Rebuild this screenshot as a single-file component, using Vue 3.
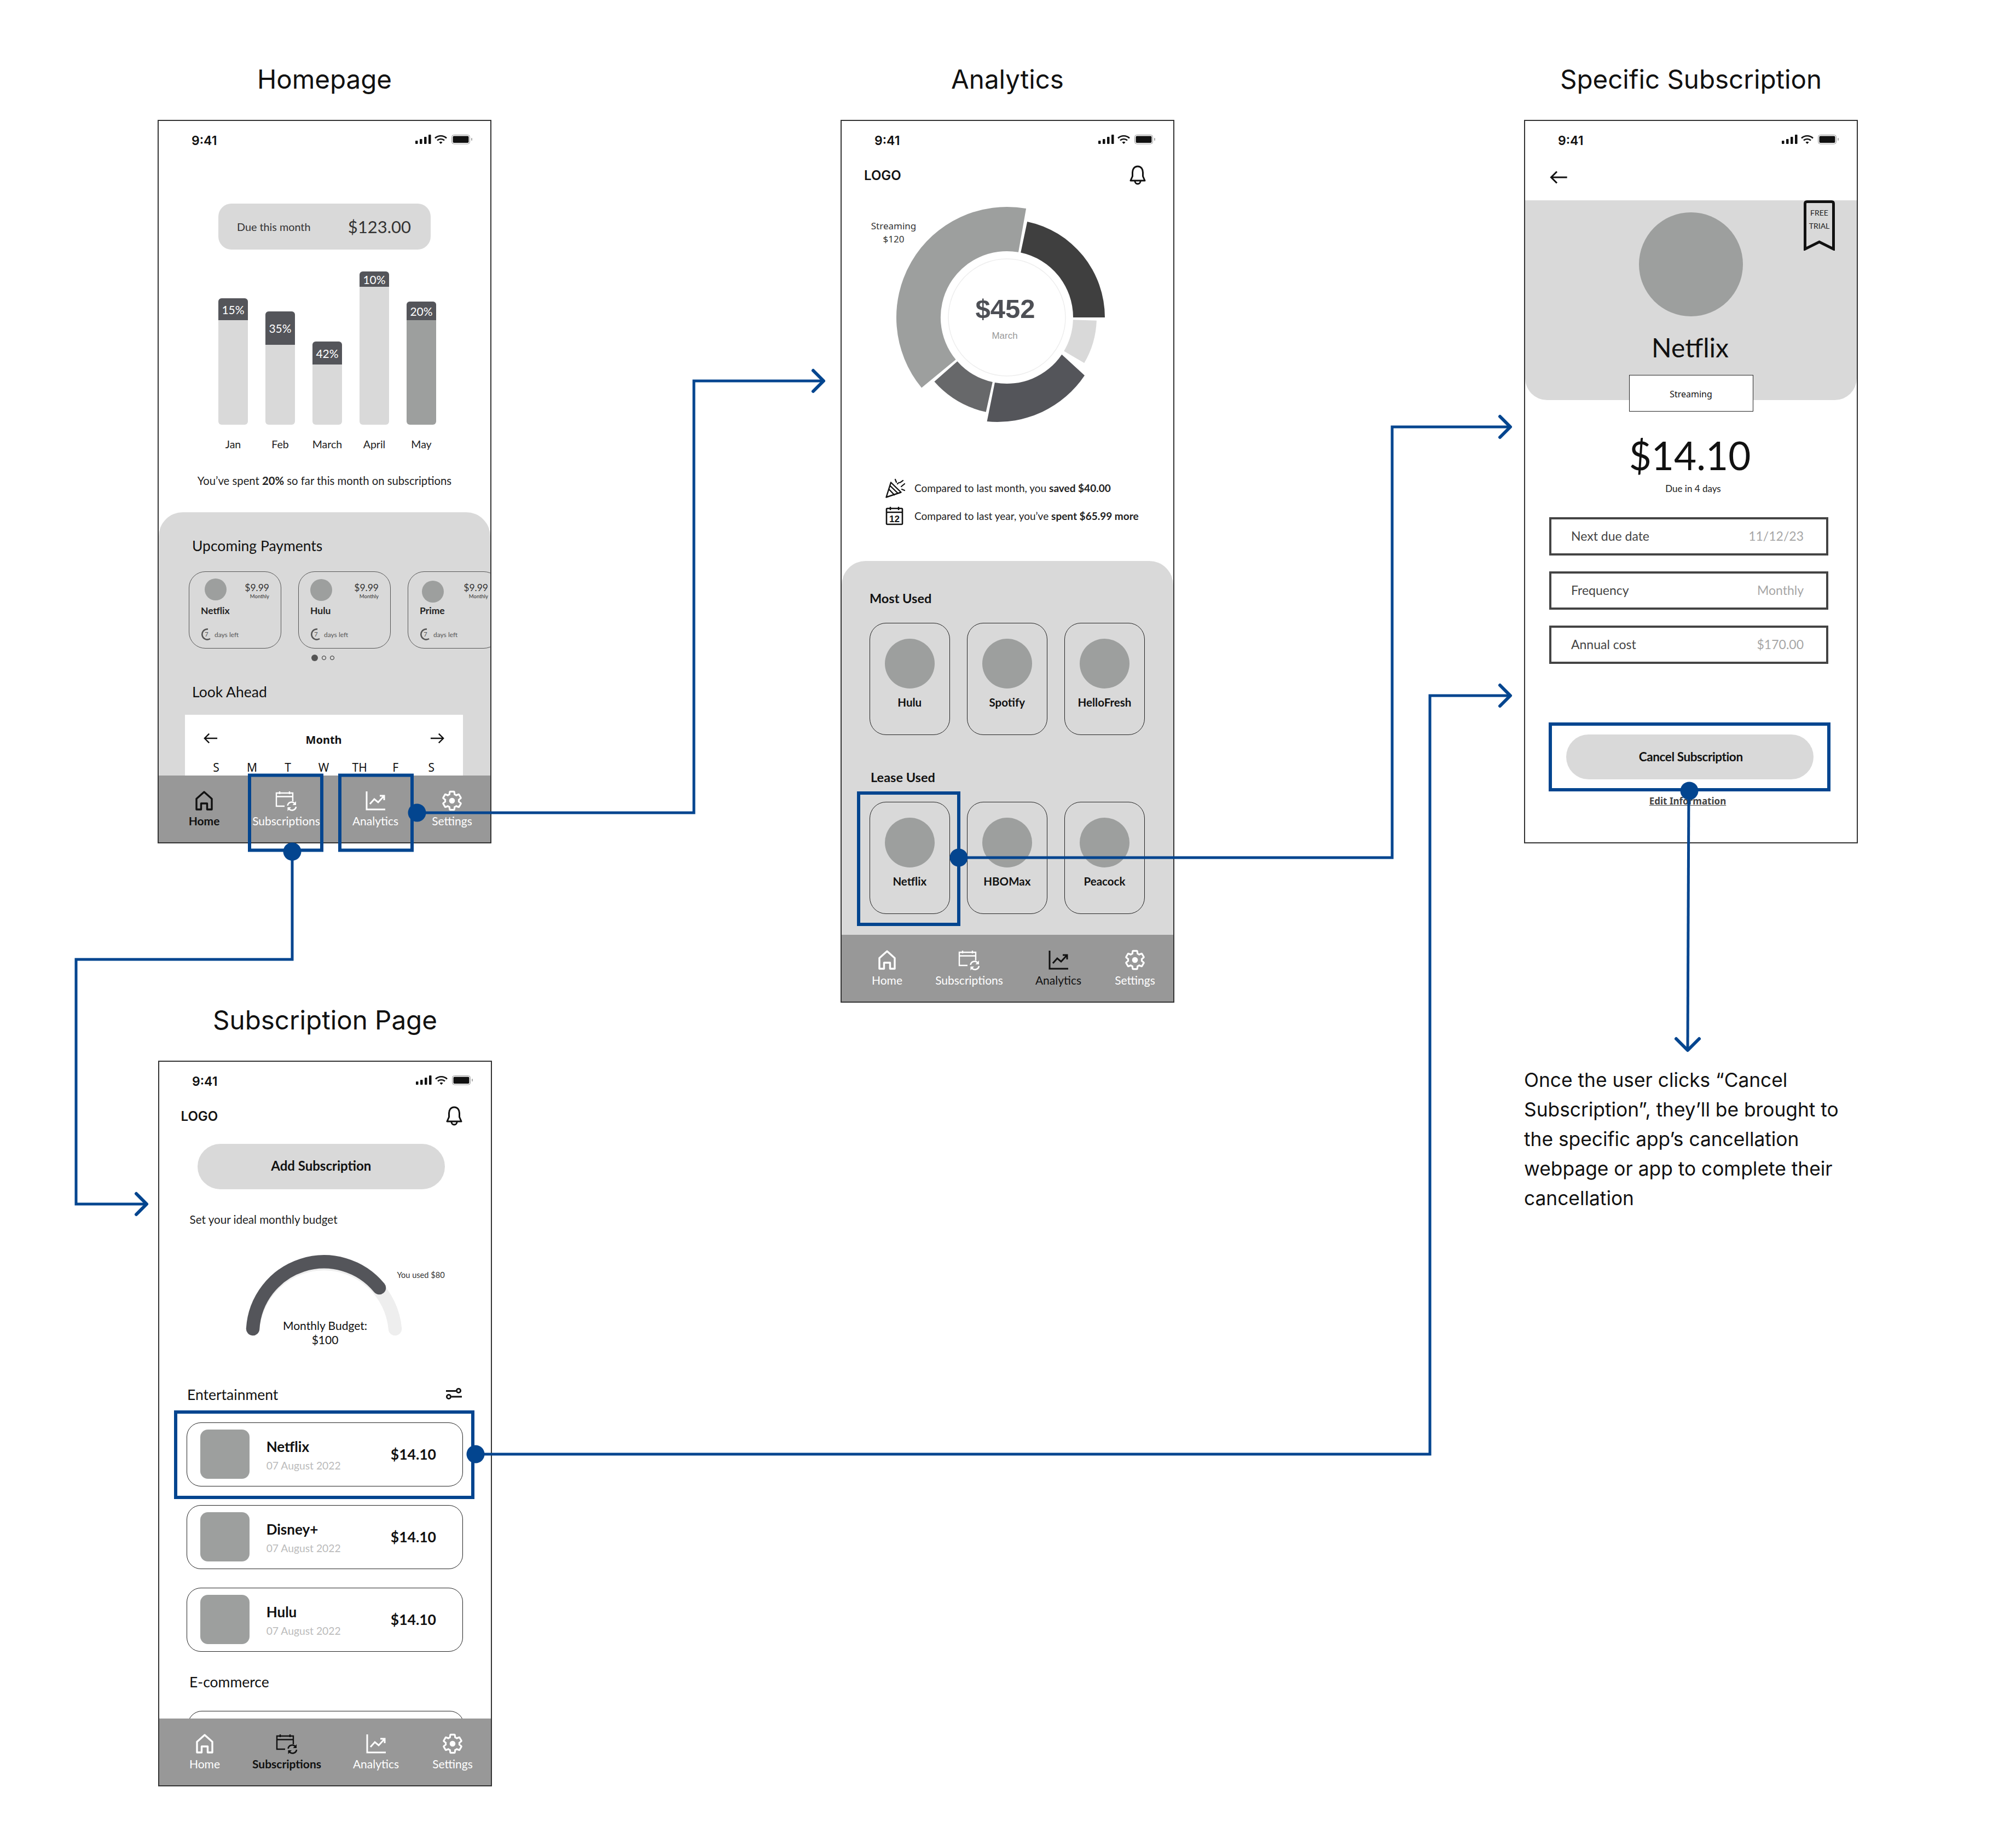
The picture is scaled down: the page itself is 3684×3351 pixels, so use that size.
<script setup>
const navItems = [
  { label: 'Home', icon: '#ico-home' },
  { label: 'Subscriptions', icon: '#ico-subs' },
  { label: 'Analytics', icon: '#ico-chart' },
  { label: 'Settings', icon: '#ico-gear' }
]

const bars = [
  { month: 'Jan', pct: '15%', height: 231, head: 40 },
  { month: 'Feb', pct: '35%', height: 207, head: 61 },
  { month: 'March', pct: '42%', height: 152, head: 42 },
  { month: 'April', pct: '10%', height: 280, head: 28 },
  { month: 'May', pct: '20%', height: 225, head: 34, current: true }
]

const payments = [
  { name: 'Netflix', left: 28, top: 14 },
  { name: 'Hulu', left: 21, top: 15 },
  { name: 'Prime', left: 25, top: 18 }
]

const weekdays = ['S', 'M', 'T', 'W', 'TH', 'F', 'S']
const mostUsed = ['Hulu', 'Spotify', 'HelloFresh']
const leastUsed = ['Netflix', 'HBOMax', 'Peacock']

const details = [
  { label: 'Next due date', value: '11/12/23' },
  { label: 'Frequency', value: 'Monthly' },
  { label: 'Annual cost', value: '$170.00' }
]

const subscriptions = ['Netflix', 'Disney+', 'Hulu']

// donut slices, angles clockwise from the top, around the same centre
const cx = 1840
const cy = 580

function point(r, deg) {
  const a = (deg * Math.PI) / 180
  return `${(cx + r * Math.sin(a)).toFixed(1)} ${(cy - r * Math.cos(a)).toFixed(1)}`
}

function slice(start, end, outer, inner = 121) {
  const large = end - start > 180 ? 1 : 0
  return `M${point(inner, start)} L${point(outer, start)} A${outer} ${outer} 0 ${large} 1 ${point(outer, end)} L${point(inner, end)} A${inner} ${inner} 0 ${large} 0 ${point(inner, start)}Z`
}

const slices = [
  { d: slice(230.5, 370, 202), fill: '#9d9f9e' },
  { d: slice(12, 90, 179), fill: '#3f3f3f' },
  { d: slice(92, 120.5, 164), fill: '#d9d9d9' },
  { d: `M${point(121, 124)} L1982 686 A192 192 0 0 1 1803.6 770 L${point(121, 190.5)} A121 121 0 0 0 ${point(121, 124)}Z`, fill: '#54555a' },
  { d: slice(192.5, 228.5, 177), fill: '#67686a' }
]

const links = [
  'M762 1485H1268V696H1505',
  'M534 1556V1753H139V2200H268',
  'M1752 1567H2544V780H2760',
  'M869 2657H2613V1271H2760',
  'M3086 1446L3084 1918'
]

const heads = [
  'M1486 677L1505 696L1486 715',
  'M249 2181L268 2200L249 2219',
  'M2741 761L2760 780L2741 799',
  'M2741 1252L2760 1271L2741 1290',
  'M3063 1898L3084 1919L3105 1898'
]

const boxes = [
  { x: 456, y: 1416.5, w: 132, h: 137 },
  { x: 621, y: 1416.5, w: 132, h: 137 },
  { x: 1569, y: 1449, w: 183, h: 240 },
  { x: 2833, y: 1323, w: 509, h: 120 },
  { x: 321, y: 2580, w: 543, h: 156 }
]

const dots = [
  [762, 1485],
  [534, 1556],
  [1752, 1567],
  [3087, 1445],
  [869, 2657]
]
</script>

<template>
  <div class="page">
    <svg class="defs" width="0" height="0">
      <symbol id="ico-status" viewBox="0 0 106 18">
        <rect x="1" y="11" width="4.5" height="6" rx="1" fill="#111" />
        <rect x="9" y="8" width="4.5" height="9" rx="1" fill="#111" />
        <rect x="17" y="4" width="4.5" height="13" rx="1" fill="#111" />
        <rect x="25" y="0" width="4.5" height="17" rx="1" fill="#111" />
        <path d="M37 6.5a15 15 0 0 1 21 0M41 10.5a9.5 9.5 0 0 1 13 0" fill="none" stroke="#111" stroke-width="2.6" />
        <path d="M44.5 14a4.5 4.5 0 0 1 6 0L47.5 17z" fill="#111" />
        <rect x="67.5" y="0.5" width="33" height="16.5" rx="4" fill="none" stroke="#999" />
        <rect x="69.5" y="2.5" width="29" height="12.5" rx="2" fill="#111" />
        <rect x="103" y="6" width="2" height="5" rx="1" fill="#aaa" />
      </symbol>
      <symbol id="ico-home" viewBox="0 0 40 40">
        <path d="M6 36V16.500L20 4L34 16.500V36H25.500V25H14.500V36Z" fill="none" stroke="currentColor" stroke-width="3.4" stroke-linejoin="round" />
      </symbol>
      <symbol id="ico-subs" viewBox="0 0 40 40">
        <path d="M17 30H2V6H32V21M2 12.500H32M8 3V8M26 3V8" fill="none" stroke="currentColor" stroke-width="2.4" />
        <path d="M22.500 29a7.500 7.500 0 0 1 12.500-4.500L37 26.500M38 31a7.500 7.500 0 0 1-12.500 4.500L23.500 33.500" fill="none" stroke="currentColor" stroke-width="2.6" />
        <path d="M38 21V28H31.500ZM22.500 39V32H29Z" fill="currentColor" />
      </symbol>
      <symbol id="ico-chart" viewBox="0 0 40 40">
        <path d="M4 3V36H38" fill="none" stroke="currentColor" stroke-width="3" />
        <path d="M10 26L18 17L25 23L36 11M28 11H36V19" fill="none" stroke="currentColor" stroke-width="3" />
      </symbol>
      <symbol id="ico-gear" viewBox="0 0 24 24">
        <path
          d="M19.430 12.980c.04-.32.07-.64.07-.98 0-.34-.03-.66-.07-.98l2.110-1.650c.19-.15.24-.42.12-.64l-2-3.460c-.09-.16-.26-.25-.44-.25-.06 0-.12.01-.17.03l-2.490 1c-.52-.4-1.080-.73-1.690-.98l-.38-2.650C14.460 2.180 14.250 2 14 2h-4c-.25 0-.46.18-.49.42l-.38 2.650c-.61.25-1.170.59-1.690.98l-2.490-1c-.06-.02-.12-.03-.18-.03-.17 0-.34.09-.43.25l-2 3.460c-.13.22-.07.49.12.64l2.110 1.650c-.04.32-.07.65-.07.98 0 .33.03.66.07.98l-2.110 1.650c-.19.15-.24.42-.12.64l2 3.460c.09.16.26.25.44.25.06 0 .12-.01.17-.03l2.490-1c.52.4 1.080.73 1.690.98l.38 2.650c.03.24.24.42.49.42h4c.25 0 .46-.18.49-.42l.38-2.650c.61-.25 1.170-.59 1.690-.98l2.490 1c.06.02.12.03.18.03.17 0 .34-.09.43-.25l2-3.460c.12-.22.07-.49-.12-.64l-2.110-1.650z"
          fill="none"
          stroke="currentColor"
          stroke-width="1.900"
        />
        <circle cx="12" cy="12" r="3.200" fill="currentColor" />
      </symbol>
      <symbol id="ico-bell" viewBox="0 0 30 36">
        <path d="M15 2C8.500 2 5.500 7.500 5.500 13V20L2 28H28L24.500 20V13C24.500 7.500 21.500 2 15 2Z" fill="none" stroke="#111" stroke-width="3" stroke-linejoin="round" />
        <path d="M10 29A5 5 0 0 0 20 29" fill="none" stroke="#111" stroke-width="3" />
      </symbol>
      <symbol id="ico-arrow" viewBox="0 0 28 24">
        <path d="M27 12H2M11 3L2 12L11 21" fill="none" stroke="#111" stroke-width="2.600" />
      </symbol>
    </svg>

    <!-- Homepage -->
    <section class="frame frame-home">
      <h2 class="frame-title">Homepage</h2>
      <div class="phone phone-short">
        <div class="status">
          <span class="time">9:41</span>
          <svg class="status-icons"><use href="#ico-status" /></svg>
        </div>
        <div class="due">
          <span class="due-label">Due this month</span>
          <span class="due-value">$123.00</span>
        </div>
        <div class="chart">
          <div v-for="bar in bars" :key="bar.month" class="chart-col">
            <div class="bar" :class="{ 'bar-current': bar.current }" :style="{ height: bar.height + 'px' }">
              <div class="bar-head" :style="{ height: bar.head + 'px' }">{{ bar.pct }}</div>
            </div>
            <span class="bar-label">{{ bar.month }}</span>
          </div>
        </div>
        <p class="spent">You’ve spent <b>20%</b> so far this month on subscriptions</p>
        <div class="sheet sheet-home">
          <h3 class="upcoming-title">Upcoming Payments</h3>
          <div class="payments">
            <div v-for="item in payments" :key="item.name" class="pay-card">
              <div class="pay-top">
                <span class="pay-logo" :style="{ marginLeft: item.left + 'px', marginTop: item.top - 14 + 'px' }"></span>
                <div class="pay-price">
                  <div class="pay-amount">$9.99</div>
                  <div class="pay-cycle">Monthly</div>
                </div>
              </div>
              <div class="pay-name">{{ item.name }}</div>
              <div class="pay-days">
                <svg class="pay-ring" viewBox="0 0 20 24">
                  <path d="M14 2.600A9.500 9.500 0 1 0 18 20" fill="none" stroke="#555" stroke-width="2.600" />
                  <text x="11.500" y="16" text-anchor="middle" font-size="11" fill="#555">7</text>
                </svg>
                <span>days left</span>
              </div>
            </div>
          </div>
          <div class="pager">
            <span class="pager-on"></span>
            <span class="pager-off"></span>
            <span class="pager-off"></span>
          </div>
          <h3 class="ahead-title">Look Ahead</h3>
          <div class="calendar">
            <div class="cal-head">
              <svg class="cal-arrow"><use href="#ico-arrow" /></svg>
              <b class="cal-month">Month</b>
              <svg class="cal-arrow cal-next"><use href="#ico-arrow" /></svg>
            </div>
            <div class="cal-days">
              <span v-for="(day, i) in weekdays" :key="i">{{ day }}</span>
            </div>
          </div>
        </div>
        <nav class="tabs">
          <div v-for="(tab, i) in navItems" :key="tab.label" class="tab" :class="{ 'tab-on': i === 0 }">
            <svg class="tab-icon"><use :href="tab.icon" /></svg>
            <span>{{ tab.label }}</span>
          </div>
        </nav>
      </div>
    </section>

    <!-- Analytics -->
    <section class="frame frame-analytics">
      <h2 class="frame-title">Analytics</h2>
      <div class="phone phone-tall">
        <div class="status">
          <span class="time">9:41</span>
          <svg class="status-icons"><use href="#ico-status" /></svg>
        </div>
        <div class="logo-row">
          <span class="logo">LOGO</span>
          <svg class="bell"><use href="#ico-bell" /></svg>
        </div>
        <div class="donut">
          <svg class="donut-svg" viewBox="1630 370 400 410">
            <path v-for="s in slices" :key="s.fill" :d="s.d" :fill="s.fill" />
            <circle :cx="cx" :cy="cy" r="107" fill="#fff" stroke="#eeeeee" stroke-width="1.500" />
          </svg>
          <div class="donut-note">Streaming<br />$120</div>
          <div class="donut-total">$452</div>
          <div class="donut-month">March</div>
        </div>
        <div class="compare compare-first">
          <svg class="compare-icon" viewBox="0 0 36 36">
            <path d="M1.500 34.500L10 7.500L28.500 25.500ZM6.500 20L17 31M8.500 13.500L23 27.500" fill="none" stroke="#111" stroke-width="2.400" stroke-linejoin="round" />
            <path d="M18 2L20 7M22 10C25 6 26 9 28 7C30 5 30 6 32 4M29 15L35 10M30 20L35 22" fill="none" stroke="#111" stroke-width="2.200" stroke-linecap="round" />
          </svg>
          <span>Compared to last month, you <b>saved $40.00</b></span>
        </div>
        <div class="compare">
          <svg class="compare-icon" viewBox="0 0 36 36">
            <rect x="2" y="4" width="29" height="29" rx="1.500" fill="none" stroke="#111" stroke-width="2.600" />
            <path d="M2 11H31M9 1V7M24 1V7" fill="none" stroke="#111" stroke-width="2.400" />
            <text x="16.500" y="29" text-anchor="middle" font-size="17" font-weight="700" font-family="Liberation Sans, sans-serif" fill="#111">12</text>
          </svg>
          <span>Compared to last year, you’ve <b>spent $65.99 more</b></span>
        </div>
        <div class="sheet sheet-analytics">
          <h3 class="used-title">Most Used</h3>
          <div class="tiles">
            <div v-for="name in mostUsed" :key="name" class="tile">
              <span class="tile-logo"></span>
              <span class="tile-name">{{ name }}</span>
            </div>
          </div>
          <h3 class="used-title used-second">Lease Used</h3>
          <div class="tiles">
            <div v-for="name in leastUsed" :key="name" class="tile">
              <span class="tile-logo"></span>
              <span class="tile-name">{{ name }}</span>
            </div>
          </div>
        </div>
        <nav class="tabs">
          <div v-for="(tab, i) in navItems" :key="tab.label" class="tab" :class="{ 'tab-dark': i === 2 }">
            <svg class="tab-icon"><use :href="tab.icon" /></svg>
            <span>{{ tab.label }}</span>
          </div>
        </nav>
      </div>
    </section>

    <!-- Specific subscription -->
    <section class="frame frame-detail">
      <h2 class="frame-title">Specific Subscription</h2>
      <div class="phone phone-short">
        <div class="status">
          <span class="time">9:41</span>
          <svg class="status-icons"><use href="#ico-status" /></svg>
        </div>
        <div class="back-row">
          <svg class="back"><use href="#ico-arrow" /></svg>
        </div>
        <div class="hero">
          <div class="ribbon">
            <svg class="ribbon-shape" viewBox="0 0 57 92">
              <path d="M2.500 89V6Q2.500 2.500 6 2.500H51Q54.500 2.500 54.500 6V89L28.500 76Z" fill="none" stroke="#111" stroke-width="5" />
            </svg>
            <span class="ribbon-text">FREE<br />TRIAL</span>
          </div>
          <span class="hero-logo"></span>
          <div class="hero-name">Netflix</div>
          <div class="hero-tag">Streaming</div>
        </div>
        <div class="amount">$14.10</div>
        <div class="due-days">Due in 4 days</div>
        <div class="details">
          <div v-for="row in details" :key="row.label" class="detail-row">
            <span>{{ row.label }}</span>
            <span class="detail-value">{{ row.value }}</span>
          </div>
        </div>
        <div class="cancel">Cancel Subscription</div>
        <a class="edit">Edit Information</a>
      </div>
    </section>

    <!-- Subscription page -->
    <section class="frame frame-subs">
      <h2 class="frame-title">Subscription Page</h2>
      <div class="phone phone-subs">
        <div class="content">
          <div class="status">
            <span class="time">9:41</span>
            <svg class="status-icons"><use href="#ico-status" /></svg>
          </div>
          <div class="logo-row logo-row-subs">
            <span class="logo">LOGO</span>
            <svg class="bell"><use href="#ico-bell" /></svg>
          </div>
          <div class="add">Add Subscription</div>
          <p class="budget-hint">Set your ideal monthly budget</p>
          <div class="gauge">
            <svg class="gauge-svg" viewBox="430 2285 400 185">
              <path d="M462 2428A130.500 130.500 0 0 1 722 2428" fill="none" stroke="#eeeeee" stroke-width="24.500" stroke-linecap="round" />
              <path d="M462 2428A130.500 130.500 0 0 1 693 2353" fill="none" stroke="#54555a" stroke-width="24.500" stroke-linecap="round" />
            </svg>
            <span class="gauge-used">You used $80</span>
            <div class="gauge-label">Monthly Budget:<br />$100</div>
          </div>
          <div class="group-head">
            <span>Entertainment</span>
            <svg class="filter" viewBox="0 0 29 21">
              <path d="M0 5.500H18M10 16H29" fill="none" stroke="#111" stroke-width="2.800" />
              <circle cx="23" cy="5" r="3.600" fill="none" stroke="#111" stroke-width="2.800" />
              <circle cx="5" cy="16" r="3.600" fill="none" stroke="#111" stroke-width="2.800" />
            </svg>
          </div>
          <div class="sub-list">
            <div v-for="name in subscriptions" :key="name" class="sub-row">
              <span class="sub-thumb"></span>
              <div class="sub-text">
                <div class="sub-name">{{ name }}</div>
                <div class="sub-date">07 August 2022</div>
              </div>
              <span class="sub-price">$14.10</span>
            </div>
          </div>
          <h3 class="group-second">E-commerce</h3>
          <div class="sub-row sub-peek"></div>
        </div>
        <nav class="tabs">
          <div v-for="(tab, i) in navItems" :key="tab.label" class="tab" :class="{ 'tab-on': i === 1 }">
            <svg class="tab-icon"><use :href="tab.icon" /></svg>
            <span>{{ tab.label }}</span>
          </div>
        </nav>
      </div>
    </section>

    <p class="note">
      Once the user clicks “Cancel<br />
      Subscription”, they’ll be brought to<br />
      the specific app’s cancellation<br />
      webpage or app to complete their<br />
      cancellation
    </p>

    <!-- connectors between the screens -->
    <svg class="links" viewBox="0 0 3684 3351">
      <rect
        v-for="b in boxes"
        :key="b.x"
        :x="b.x"
        :y="b.y"
        :width="b.w"
        :height="b.h"
        fill="none"
        stroke="#03458f"
        stroke-width="6"
      />
      <path v-for="d in links" :key="d" :d="d" fill="none" stroke="#03458f" stroke-width="5" />
      <path v-for="d in heads" :key="d" :d="d" fill="none" stroke="#03458f" stroke-width="6" stroke-linecap="round" stroke-linejoin="round" />
      <circle v-for="p in dots" :key="p[0]" :cx="p[0]" :cy="p[1]" r="16.500" fill="#03458f" />
    </svg>
  </div>
</template>

<style scoped>
.page {
  position: relative;
  width: 3684px;
  height: 3351px;
  overflow: hidden;
  background: #fff;
  color: #111;
  font-family: Lato, "Noto Sans", sans-serif;
}

.defs {
  position: absolute;
}

.frame {
  position: absolute;
  display: flex;
  flex-direction: column;
  width: 610px;
}

.frame-home {
  left: 288px;
  top: 115px;
}

.frame-analytics {
  left: 1536px;
  top: 115px;
}

.frame-detail {
  left: 2785px;
  top: 115px;
}

.frame-subs {
  left: 289px;
  top: 1834px;
}

.frame-title {
  margin: 0 0 44px;
  font: 400 47.500px/60px Inter, sans-serif;
  text-align: center;
  white-space: nowrap;
}

.phone {
  display: flex;
  flex-direction: column;
  box-sizing: border-box;
  overflow: hidden;
  background: #fff;
  border: 2px solid #333;
}

.phone-short {
  height: 1322px;
}

.phone-tall {
  height: 1613px;
}

.phone-subs {
  height: 1326px;
}

.status {
  display: flex;
  flex-shrink: 0;
  align-items: center;
  justify-content: space-between;
  height: 72px;
  padding: 0 32px 0 60px;
}

.time {
  font: 600 23px/30px Inter, sans-serif;
}

.status-icons {
  width: 106px;
  height: 18px;
  margin-top: -5px;
}

/* home */
.due {
  display: flex;
  align-items: center;
  justify-content: space-between;
  box-sizing: border-box;
  flex-shrink: 0;
  width: 388px;
  height: 84px;
  margin: 79px 0 0 109px;
  padding: 0 36px 0 34px;
  background: #d9d9d9;
  border-radius: 24px;
}

.due-label {
  font-size: 19.800px;
  color: #333;
}

.due-value {
  font-size: 31px;
  color: #333;
}

.chart {
  display: flex;
  flex-shrink: 0;
  align-items: flex-end;
  gap: 32px;
  height: 368px;
  margin-left: 109px;
}

.chart-col {
  display: flex;
  flex-direction: column;
  align-items: center;
  width: 54px;
}

.bar {
  width: 54px;
  overflow: hidden;
  background: #d9d9d9;
  border-radius: 6px;
}

.bar-current {
  background: #9d9f9e;
}

.bar-head {
  display: flex;
  align-items: center;
  justify-content: center;
  color: #fff;
  font-size: 21px;
  background: #54555a;
}

.bar-label {
  margin-top: 24px;
  font-size: 19.500px;
  line-height: 24px;
  white-space: nowrap;
  color: #222;
}

.spent {
  flex-shrink: 0;
  margin: 42px 0 0;
  font-size: 20.300px;
  line-height: 24px;
  text-align: center;
  color: #222;
}

.sheet {
  flex: 1;
  min-height: 0;
  overflow: hidden;
  background: #d9d9d9;
  border-radius: 44px 44px 0 0;
}

.sheet-home {
  margin-top: 46px;
  padding-top: 46px;
}

.upcoming-title,
.ahead-title {
  margin: 0 0 0 61px;
  font-size: 26.500px;
  font-weight: 400;
  line-height: 30px;
  white-space: nowrap;
}

.payments {
  display: flex;
  gap: 31px;
  margin: 32px 0 0 55px;
}

.pay-card {
  flex-shrink: 0;
  box-sizing: border-box;
  width: 169px;
  height: 141px;
  border: 1.500px solid #555;
  border-radius: 30px;
}

.pay-top {
  display: flex;
  justify-content: space-between;
  box-sizing: border-box;
  height: 60px;
  padding: 12px 21px 0 0;
}

.pay-logo {
  width: 40px;
  height: 40px;
  background: #9d9f9e;
  border-radius: 50%;
}

.pay-price {
  padding-top: 7px;
  text-align: right;
}

.pay-amount {
  font-size: 17.500px;
  line-height: 20px;
  color: #333;
}

.pay-cycle {
  font-size: 9.500px;
  line-height: 12px;
  color: #333;
}

.pay-name {
  margin: 1px 0 0 21px;
  font-size: 17.500px;
  font-weight: 700;
  line-height: 20px;
  color: #222;
}

.pay-days {
  display: flex;
  align-items: center;
  gap: 6px;
  height: 24px;
  margin: 21px 0 0 20px;
  font-size: 12px;
  color: #555;
}

.pay-ring {
  width: 20px;
  height: 24px;
}

.pager {
  display: flex;
  align-items: center;
  gap: 7px;
  height: 12px;
  margin: 11px 0 0 279px;
}

.pager-on {
  width: 12px;
  height: 12px;
  background: #555;
  border-radius: 50%;
}

.pager-off {
  box-sizing: border-box;
  width: 8px;
  height: 8px;
  border: 1.500px solid #222;
  border-radius: 50%;
}

.ahead-title {
  margin-top: 41px;
}

.calendar {
  width: 508px;
  height: 200px;
  margin: 27px 0 0 47.600px;
  background: #fff;
}

.cal-head {
  display: flex;
  align-items: center;
  justify-content: space-between;
  height: 60px;
  padding: 13px 34px 0;
}

.cal-arrow {
  width: 26px;
  height: 24px;
}

.cal-next {
  transform: scaleX(-1);
}

.cal-month {
  margin-top: 5px;
  font: 700 20px "Noto Sans", sans-serif;
}

.cal-days {
  display: grid;
  grid-template-columns: repeat(7, 1fr);
  margin-top: 8px;
  padding: 0 24.700px;
  font: 400 21px/30px "Noto Sans", sans-serif;
  text-align: center;
}

/* tabs */
.tabs {
  display: grid;
  flex-shrink: 0;
  grid-template-columns: 166px 134px 192px 88px;
  height: 122px;
  color: #fff;
  background: #989898;
}

.tab {
  display: flex;
  flex-direction: column;
  align-items: center;
  padding-top: 27px;
  font-size: 21px;
  line-height: 24px;
  white-space: nowrap;
}

.tab-on {
  color: #111;
  font-weight: 700;
}

.tab-dark {
  color: #111;
}

.tab-icon {
  flex-shrink: 0;
  width: 40px;
  height: 40px;
  margin-top: -1px;
  margin-bottom: 5px;
}

/* analytics */
.logo-row {
  display: flex;
  flex-shrink: 0;
  align-items: center;
  justify-content: space-between;
  height: 50px;
  margin-top: 2px;
  padding: 0 50px 0 41px;
}

.logo {
  font: 600 24px Inter, sans-serif;
}

.bell {
  width: 30px;
  height: 36px;
}

.donut {
  position: relative;
  flex-shrink: 0;
  width: 400px;
  height: 410px;
  margin: 25px 0 0 92px;
}

.donut-svg {
  display: block;
  width: 400px;
  height: 410px;
}

.donut-note {
  position: absolute;
  top: 31px;
  left: -50px;
  width: 106px;
  color: #333;
  font: 400 17px/24px "Noto Sans", sans-serif;
  text-align: center;
}

.donut-total {
  position: absolute;
  top: 166px;
  left: 0;
  width: 414px;
  color: #4d4f55;
  font: 700 49px/56px "Liberation Sans", sans-serif;
  text-align: center;
}

.donut-month {
  position: absolute;
  top: 232px;
  left: 0;
  width: 412px;
  color: #999;
  font: 400 17px/24px "Liberation Sans", sans-serif;
  text-align: center;
}

.compare {
  display: flex;
  flex-shrink: 0;
  align-items: center;
  gap: 17px;
  height: 36px;
  margin: 15px 0 0 80px;
  color: #222;
  font-size: 19px;
  white-space: nowrap;
}

.compare-first {
  margin-top: 93.600px;
}

.compare-icon {
  width: 36px;
  height: 36px;
}

.sheet-analytics {
  margin-top: 64.400px;
  padding-top: 53px;
}

.used-title {
  margin: 0 0 0 51px;
  font-size: 23.500px;
  font-weight: 700;
  line-height: 30px;
}

.used-second {
  margin: 62px 0 0 53px;
}

.tiles {
  display: grid;
  grid-template-columns: repeat(3, 146.500px);
  gap: 31.600px;
  margin: 30px 0 0 51px;
}

.tile {
  display: flex;
  flex-direction: column;
  align-items: center;
  box-sizing: border-box;
  height: 205px;
  padding-top: 28px;
  border: 1.500px solid #222;
  border-radius: 30px;
}

.tile-logo {
  width: 91px;
  height: 91px;
  background: #9d9f9e;
  border-radius: 50%;
}

.tile-name {
  margin-top: 13px;
  font-size: 20.500px;
  font-weight: 700;
  line-height: 24px;
}

/* detail */
.back-row {
  display: flex;
  flex-shrink: 0;
  align-items: center;
  box-sizing: border-box;
  height: 73px;
  padding: 0 0 11px 45px;
}

.back {
  width: 33px;
  height: 28px;
}

.hero {
  position: relative;
  display: flex;
  flex-direction: column;
  flex-shrink: 0;
  align-items: center;
  box-sizing: border-box;
  height: 365px;
  padding-top: 22px;
  background: #d9d9d9;
  border-radius: 0 0 40px 40px;
}

.ribbon {
  position: absolute;
  top: 0;
  right: 40px;
  width: 57px;
  height: 92px;
}

.ribbon-shape {
  display: block;
  width: 57px;
  height: 92px;
}

.ribbon-text {
  position: absolute;
  top: 11px;
  left: 0;
  width: 57px;
  font-size: 14px;
  line-height: 24px;
  text-align: center;
  color: #222;
}

.hero-logo {
  flex-shrink: 0;
  width: 190px;
  height: 190px;
  background: #9d9f9e;
  border-radius: 50%;
}

.hero-name {
  margin-top: 29px;
  margin-right: 3px;
  font-size: 48px;
  line-height: 56px;
}

.hero-tag {
  display: flex;
  flex-shrink: 0;
  align-items: center;
  justify-content: center;
  box-sizing: border-box;
  width: 227px;
  height: 67px;
  margin-top: 22px;
  padding-top: 3px;
  font: 400 16px "Noto Sans", sans-serif;
  background: #fff;
  border: 1.500px solid #222;
}

.amount {
  flex-shrink: 0;
  margin-top: 61px;
  padding-right: 4px;
  font-size: 71px;
  line-height: 80px;
  text-align: center;
}

.due-days {
  flex-shrink: 0;
  margin-top: 9.600px;
  padding-left: 8px;
  font-size: 17px;
  line-height: 22px;
  text-align: center;
  color: #222;
}

.details {
  display: flex;
  flex-direction: column;
  flex-shrink: 0;
  gap: 29px;
  width: 510px;
  margin: 41.400px 0 0 44px;
}

.detail-row {
  display: flex;
  align-items: center;
  justify-content: space-between;
  box-sizing: border-box;
  height: 70px;
  padding: 0 41px 2px 36px;
  color: #444;
  font-size: 23px;
  border: 4px solid #444;
}

.detail-value {
  color: #a6a6a6;
}

.cancel {
  display: flex;
  flex-shrink: 0;
  align-items: center;
  justify-content: center;
  box-sizing: border-box;
  width: 451.500px;
  height: 82px;
  margin: 129px 0 0 75px;
  padding-left: 4px;
  font-size: 22.500px;
  font-weight: 700;
  letter-spacing: -0.400px;
  background: #d9d9d9;
  border-radius: 41px;
}

.edit {
  flex-shrink: 0;
  margin-top: 28px;
  padding-right: 12px;
  color: #444;
  font: 700 17px/24px "Noto Sans", sans-serif;
  text-align: center;
  text-decoration: underline;
}

/* subscriptions */
.content {
  flex: 1;
  min-height: 0;
  overflow: hidden;
}

.logo-row-subs {
  height: 54px;
  margin-top: 0;
  padding: 0 52px 0 39.500px;
}

.add {
  display: flex;
  align-items: center;
  justify-content: center;
  box-sizing: border-box;
  width: 452.500px;
  height: 82.500px;
  margin: 24px 0 0 69.500px;
  padding-bottom: 3px;
  font-size: 24px;
  font-weight: 700;
  background: #d9d9d9;
  border-radius: 42px;
}

.budget-hint {
  margin: 41.500px 0 0 55.600px;
  font-size: 20.600px;
  line-height: 28px;
  color: #222;
}

.gauge {
  position: relative;
  height: 185px;
  margin-top: 43px;
}

.gauge-svg {
  display: block;
  width: 400px;
  height: 185px;
  margin-left: 139px;
}

.gauge-used {
  position: absolute;
  top: 35px;
  left: 434.500px;
  font-size: 14.600px;
  line-height: 20px;
  color: #333;
}

.gauge-label {
  position: absolute;
  top: 124px;
  left: 203px;
  width: 200px;
  font-size: 21px;
  line-height: 26px;
  text-align: center;
  color: #111;
}

.group-head {
  display: flex;
  align-items: center;
  justify-content: space-between;
  height: 30px;
  margin-top: 62.500px;
  padding: 0 53px 0 51px;
  font-size: 26.500px;
}

.filter {
  width: 29px;
  height: 21px;
  margin-top: -2px;
}

.sub-list {
  display: flex;
  flex-direction: column;
  gap: 33.500px;
  margin: 36px 0 0 50px;
}

.sub-row {
  display: flex;
  align-items: center;
  box-sizing: border-box;
  width: 504.500px;
  height: 117.500px;
  padding: 0 47.500px 0 23.700px;
  border: 1.500px solid #222;
  border-radius: 26px;
}

.sub-thumb {
  flex-shrink: 0;
  width: 90px;
  height: 90px;
  background: #9d9f9e;
  border-radius: 14px;
}

.sub-text {
  flex: 1;
  margin-left: 31px;
  padding-top: 4px;
}

.sub-name {
  font-size: 26px;
  font-weight: 700;
  line-height: 30px;
}

.sub-date {
  margin-top: 7px;
  color: #bbb;
  font-size: 19.300px;
  line-height: 26px;
}

.sub-price {
  font-size: 26.500px;
  font-weight: 700;
}

.group-second {
  margin: 39.500px 0 0 55px;
  font-size: 26.500px;
  font-weight: 400;
  line-height: 30px;
}

.sub-peek {
  margin: 38px 0 0 52px;
}

.note {
  position: absolute;
  left: 2785px;
  top: 1947px;
  margin: 0;
  font: 400 35.300px/54px Inter, sans-serif;
  white-space: nowrap;
}

.links {
  position: absolute;
  top: 0;
  left: 0;
  width: 3684px;
  height: 3351px;
  pointer-events: none;
}
</style>

<style>
html,
body {
  margin: 0;
  background: #fff;
}
</style>
